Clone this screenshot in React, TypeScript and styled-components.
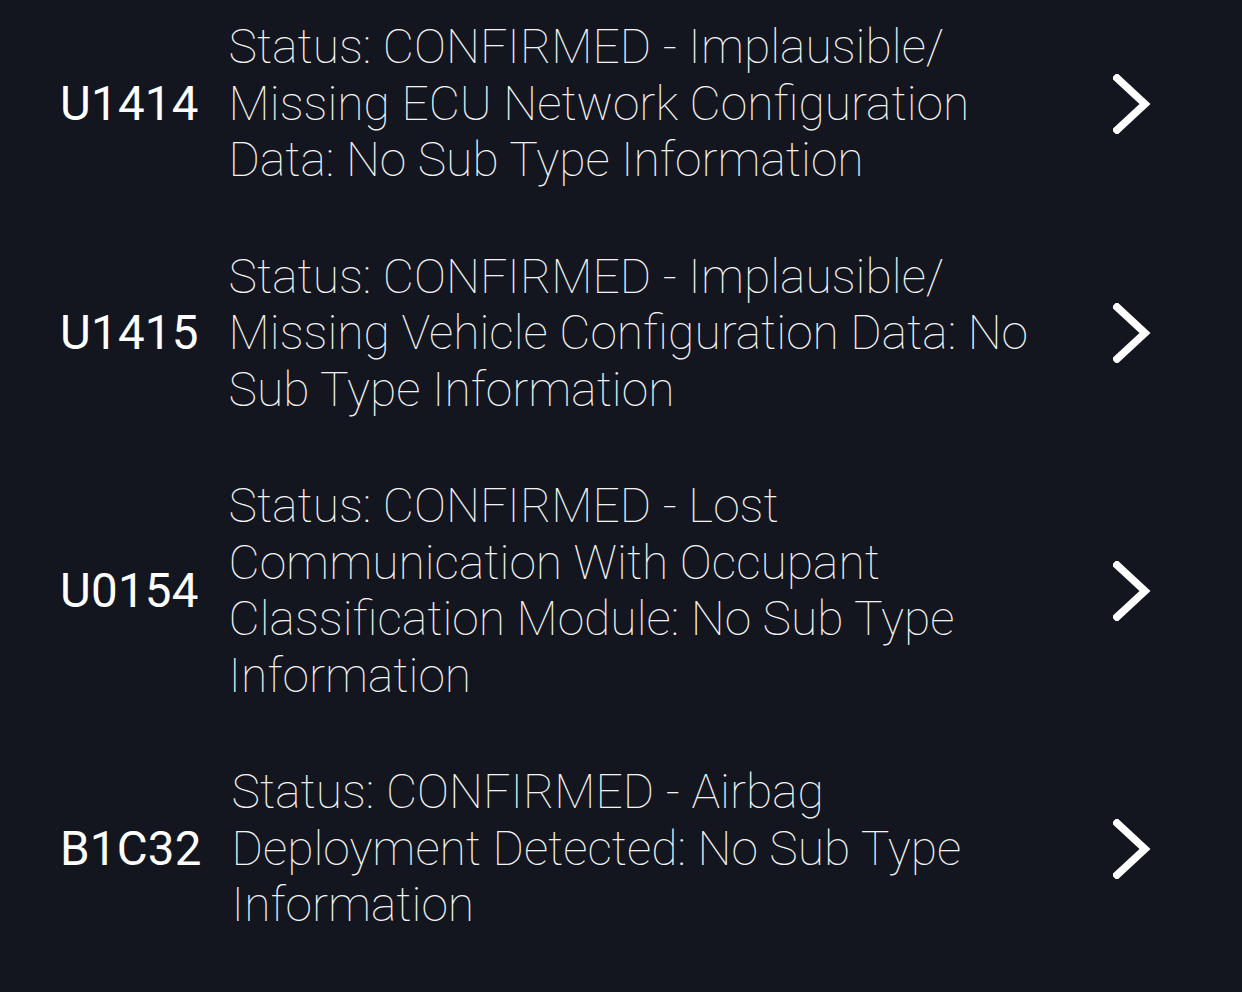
import styled, { createGlobalStyle } from 'styled-components';

const GlobalStyle = createGlobalStyle`
    html, body {
        margin: 0;
        padding: 0;
        background: #13161f;
    }
    body {
        font-family: Roboto, 'Liberation Sans', sans-serif;
        color: #ffffff;
        overflow: hidden;
    }
`;

const Page = styled.div`
    width: 1242px;
    height: 992px;
    overflow: hidden;
    background: #13161f;
`;

const List = styled.div`
    display: flex;
    flex-direction: column;
    gap: 60px;
    padding: 19px 89px 0 60px;
`;

const Row = styled.div`
    display: flex;
    align-items: center;
`;

const Code = styled.div`
    font-size: 47.5px;
    font-weight: 400;
    color: #ffffff;
    letter-spacing: 0.2px;
    white-space: nowrap;
    margin-right: 30px;
`;

const Description = styled.div`
    flex: 1;
    font-size: 48px;
    font-weight: 100;
    line-height: 56.5px;
    color: #f4f4f4;
    padding-right: 55px;
`;

const Chevron = styled.svg`
    width: 40px;
    height: 60px;
    flex-shrink: 0;
`;

const faults = [
    { code: 'U1414', text: 'Status: CONFIRMED - Implausible/ Missing ECU Network Configuration Data: No Sub Type Information' },
    { code: 'U1415', text: 'Status: CONFIRMED - Implausible/ Missing Vehicle Configuration Data: No Sub Type Information' },
    { code: 'U0154', text: 'Status: CONFIRMED - Lost Communication With Occupant Classification Module: No Sub Type Information' },
    { code: 'B1C32', text: 'Status: CONFIRMED - Airbag Deployment Detected: No Sub Type Information' },
];

export default function App() {
    return (
        <Page>
            <GlobalStyle />
            <List>
                {faults.map(f => (
                    <Row key={f.code}>
                        <Code>{f.code}</Code>
                        <Description>{f.text}</Description>
                        <Chevron viewBox='0 0 40 60'>
                            <polyline points='4,4 32,30 4,56' fill='none' stroke='#ffffff' strokeWidth='7.5' strokeLinecap='square' strokeLinejoin='miter' />
                        </Chevron>
                    </Row>
                ))}
            </List>
        </Page>
    );
}
